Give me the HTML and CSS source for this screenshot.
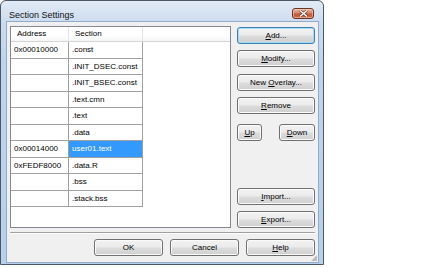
FILE: index.html
```html
<!DOCTYPE html>
<html>
<head>
<meta charset="utf-8">
<link rel="stylesheet" href="styles.css">
</head>
<body>
<div class="window">
  <div class="titlebar">
    <span class="title">Section Settings</span>
    <div class="close">
      <svg width="9" height="7" viewBox="0 0 9 7"><path d="M1 0.5 L8 6.5 M8 0.5 L1 6.5" stroke="#5a2a1e" stroke-width="2.6"/><path d="M1 0.5 L8 6.5 M8 0.5 L1 6.5" stroke="#fff" stroke-width="1.5"/></svg>
    </div>
  </div>
  <div class="client">
    <div class="main">
      <div class="list">
        <div class="head">
          <div class="hcell c1">Address</div>
          <div class="hcell c2">Section</div>
          <div class="hfill"></div>
        </div>
        <div class="row"><div class="cell c1">0x00010000</div><div class="cell c2">.const</div></div>
        <div class="row"><div class="cell c1"></div><div class="cell c2">.INIT_DSEC.const</div></div>
        <div class="row"><div class="cell c1"></div><div class="cell c2">.INIT_BSEC.const</div></div>
        <div class="row"><div class="cell c1"></div><div class="cell c2">.text.cmn</div></div>
        <div class="row"><div class="cell c1"></div><div class="cell c2">.text</div></div>
        <div class="row"><div class="cell c1"></div><div class="cell c2">.data</div></div>
        <div class="row"><div class="cell c1">0x00014000</div><div class="cell c2 sel">user01.text</div></div>
        <div class="row"><div class="cell c1">0xFEDF8000</div><div class="cell c2">.data.R</div></div>
        <div class="row"><div class="cell c1"></div><div class="cell c2">.bss</div></div>
        <div class="row"><div class="cell c1"></div><div class="cell c2">.stack.bss</div></div>
      </div>
      <div class="side">
        <div class="btn default"><u>A</u>dd...</div>
        <div class="btn"><u>M</u>odify...</div>
        <div class="btn">New <u>O</u>verlay...</div>
        <div class="btn"><u>R</u>emove</div>
        <div class="updown">
          <div class="btn up"><u>U</u>p</div>
          <div class="btn down"><u>D</u>own</div>
        </div>
        <div class="btn import"><u>I</u>mport...</div>
        <div class="btn"><u>E</u>xport...</div>
      </div>
    </div>
    <div class="sep"></div>
    <div class="footer">
      <div class="btn fbtn">OK</div>
      <div class="btn fbtn">Cancel</div>
      <div class="btn fbtn"><u>H</u>elp</div>
    </div>
    <div class="grip"></div>
  </div>
</div>
</body>
</html>
```
FILE: styles.css
```css
* { box-sizing: border-box; }
html, body { margin: 0; padding: 0; background: #fff; }
body {
  font-family: "Liberation Sans", Arial, sans-serif;
  font-size: 8px;
  color: #000;
}
.window {
  width: 324px;
  height: 265px;
  border: 1px solid #4b5866;
  border-radius: 6px 6px 0 0;
  background: linear-gradient(180deg, #e2ebf6 0px, #ccdcef 21px, #bfd4ec 60px, #b9d0ea 100%);
  display: flex;
  flex-direction: column;
}
.titlebar {
  height: 21px;
  padding: 0 9px 0 8px;
  display: flex;
  justify-content: space-between;
  align-items: flex-start;
}
.title {
  font-size: 9px;
  line-height: 12px;
  padding-top: 8px;
  color: #111;
}
.close {
  margin-top: 7px;
  width: 22px;
  height: 11px;
  border: 1px solid #6b3428;
  border-radius: 3px;
  background: linear-gradient(180deg, #e9b4a2 0%, #d88468 45%, #c2573a 55%, #c9694a 100%);
  box-shadow: inset 0 0 0 1px rgba(255,220,200,0.5);
  display: flex;
  align-items: center;
  justify-content: center;
}
.close svg { display: block; }
.client {
  position: relative;
  margin: 0 5px 0 6px;
  height: 240px;
  background: #f0f0f0;
  box-shadow: 0 0 0 1px #93abc8;
  padding: 4px 3px 6px 3px;
  display: flex;
  flex-direction: column;
}
.main {
  display: flex;
  gap: 6px;
  height: 202px;
}
.list {
  width: 221px;
  height: 202px;
  border: 1px solid #828790;
  background: #fff;
}
.head {
  display: flex;
  height: 15px;
  background: linear-gradient(180deg, #ffffff 0%, #ffffff 60%, #f4f5f7 100%);
  border-bottom: 1px solid #d5d5d5;
}
.hcell {
  height: 14px;
  line-height: 14px;
  padding-left: 6px;
  border-right: 1px solid #e3e4e6;
}
.hfill { flex: 1; }
.c1 { width: 58px; }
.c2 { width: 74px; }
.row {
  display: flex;
  height: 16.5px;
}
.cell {
  height: 16.5px;
  line-height: 15.5px;
  padding-left: 3px;
  border-right: 1px solid #a0a0a0;
  border-bottom: 1px solid #a0a0a0;
  white-space: nowrap;
}
.cell.sel {
  background: #3399ff;
  color: #fff;
}
.side {
  width: 78px;
  display: flex;
  flex-direction: column;
  padding-top: 1px;
}
.btn {
  height: 17px;
  line-height: 15px;
  text-align: center;
  border: 1px solid #707070;
  border-radius: 3px;
  background: linear-gradient(180deg, #f2f2f2 0%, #ebebeb 48%, #dddddd 52%, #cfcfcf 100%);
  box-shadow: inset 0 0 0 1px #fbfbfb;
  white-space: nowrap;
}
.side > .btn + .btn { margin-top: 6.33px; }
.btn.default {
  border-color: #3c7fb1;
  box-shadow: inset 0 0 0 1px #a6dcf6;
}
.updown {
  margin-top: 10px;
  display: flex;
  justify-content: space-between;
}
.up { width: 25px; }
.down { width: 36px; }
.side > .btn.import { margin-top: auto; }
.sep {
  margin-top: 4px;
  height: 2px;
  border-top: 1px solid #a0a0a0;
  border-bottom: 1px solid #ffffff;
}
.footer {
  margin-top: 5px;
  display: flex;
  justify-content: flex-end;
  gap: 7px;
}
.fbtn { width: 69px; }
.grip {
  position: absolute;
  right: 1px;
  bottom: 1px;
  width: 6px;
  height: 6px;
  background:
    radial-gradient(circle, #b8b8b8 0.7px, transparent 0.8px) 0 0 / 2px 2px;
  clip-path: polygon(100% 0, 100% 100%, 0 100%);
}
```
